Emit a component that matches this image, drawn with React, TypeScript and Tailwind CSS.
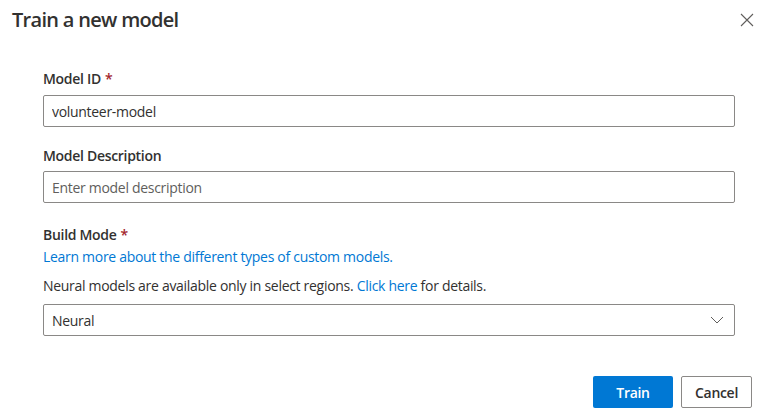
function Label({ text, required }: { text: string; required?: boolean }) {
  return (
    <div className="h-5 text-[14px] leading-5 font-semibold text-[#323130]">
      {text}
      {required && <span className="text-[#a4262c] pl-1">*</span>}
    </div>
  );
}

export default function App() {
  return (
    <div className="w-[774px] h-[416px] bg-white font-['Open_Sans',sans-serif] tracking-[-0.3px] text-[#323130] relative overflow-hidden">
      {/* Header */}
      <div className="flex items-center justify-between pl-3 pr-[19px] pt-[6px] h-[34px]">
        <h1 className="text-[20px] leading-7 font-semibold tracking-[-0.7px]">Train a new model</h1>
        <button className="w-4 h-4 flex items-center justify-center text-[#605e5c]">
          <svg viewBox="0 0 14 14" className="w-[14px] h-[14px]" fill="none" stroke="currentColor" strokeWidth={1.1}>
            <path d="M1 1L13 13M13 1L1 13" />
          </svg>
        </button>
      </div>

      {/* Form */}
      <div className="flex flex-col pl-[43px] pr-[39px] pt-[35px]">
        <Label text="Model ID" required />
        <input
          className="mt-[6px] h-8 px-2 border border-[#8a8886] rounded-[2px] text-[14px] text-[#323130] outline-none"
          defaultValue="volunteer-model"
        />

        <div className="mt-[19px]">
          <Label text="Model Description" />
        </div>
        <input
          className="mt-[5px] h-8 px-2 border border-[#8a8886] rounded-[2px] text-[14px] text-[#323130] placeholder-[#605e5c] outline-none"
          placeholder="Enter model description"
        />

        <div className="mt-[22px]">
          <Label text="Build Mode" required />
        </div>
        <a className="mt-[2px] h-5 text-[14px] leading-5 text-[#0078d4]">
          Learn more about the different types of custom models.
        </a>
        <p className="mt-[9px] h-5 text-[14px] leading-5">
          Neural models are available only in select regions.{' '}
          <a className="text-[#0078d4]">Click here</a> for details.
        </p>
        <div className="mt-[8px] h-8 pl-2 pr-[10px] border border-[#8a8886] rounded-[2px] flex items-center justify-between text-[14px]">
          <span>Neural</span>
          <svg viewBox="0 0 14 8" className="w-[14px] h-2 text-[#605e5c]" fill="none" stroke="currentColor" strokeWidth={1}>
            <path d="M1 1L7 7L13 1" />
          </svg>
        </div>
      </div>

      {/* Footer */}
      <div className="flex justify-end gap-2 pr-[22px] mt-[40px]">
        <button className="w-20 h-8 bg-[#0078d4] text-white text-[14px] font-semibold rounded-[2px]">
          Train
        </button>
        <button className="w-[71px] h-8 bg-white border border-[#8a8886] text-[14px] font-semibold rounded-[2px]">
          Cancel
        </button>
      </div>
    </div>
  );
}
